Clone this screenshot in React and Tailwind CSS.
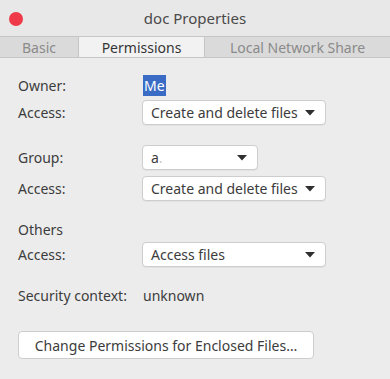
import React from 'react';

const Caret = () => (
  <svg width="10" height="6" viewBox="0 0 10 6" className="shrink-0">
    <path d="M0 0 L10 0 L5 5.5 Z" fill="#2f2f2f" />
  </svg>
);

const Dropdown = ({ children, width }) => (
  <div
    className={`flex h-[25px] items-center justify-between rounded-[4px] border border-[#cdcdcd] bg-white pl-[8px] pr-[10px] shadow-[0_1px_0_rgba(0,0,0,0.04)] ${width}`}
  >
    <span>{children}</span>
    <Caret />
  </div>
);

const Row = ({ label, children, className = '' }) => (
  <div className={`flex items-center ${className}`}>
    <div className="w-[124px] shrink-0">{label}</div>
    {children}
  </div>
);

export default function App() {
  return (
    <div
      className="h-[379px] w-[390px] overflow-hidden bg-[#ececec] text-[14px] text-[#3c3c3c]"
      style={{ fontFamily: '"Noto Sans", "Open Sans", sans-serif' }}
    >
      {/* title bar */}
      <div className="relative flex h-[36px] items-center justify-center bg-[#e8e8e8]">
        <div className="absolute left-[9px] top-[12px] h-[14px] w-[14px] rounded-full bg-[#ef3a4a]" />
        <span className="text-[15px] text-[#4a4a4a]">doc Properties</span>
      </div>

      {/* tabs */}
      <div className="flex h-[22px] border-y border-[#c6c6c6] bg-[#dadada] text-[14px]">
        <div className="flex w-[79px] items-center justify-center border-r border-[#c6c6c6] text-[#8a8a8a]">Basic</div>
        <div className="flex w-[126px] items-center justify-center border-r border-[#c6c6c6] bg-[#f2f2f2] text-[#353535]">Permissions</div>
        <div className="flex flex-1 items-center justify-center text-[#8a8a8a]">Local Network Share</div>
      </div>

      <div className="px-[18px] pt-[18px]">
        <Row label="Owner:" className="h-[18px]">
          <span className="ml-[1px] bg-[#3a6cc6] px-[1px] text-white">Me</span>
        </Row>
        <Row label="Access:" className="mt-[6px]">
          <Dropdown width="w-[184px]">Create and delete files</Dropdown>
        </Row>

        <Row label="Group:" className="mt-[20px]">
          <Dropdown width="w-[116px]">
            a<span className="text-[#c8c8c8]">.</span>
          </Dropdown>
        </Row>
        <Row label="Access:" className="mt-[6px]">
          <Dropdown width="w-[184px]">Create and delete files</Dropdown>
        </Row>

        <div className="mt-[18px] flex h-[20px] items-center">Others</div>
        <Row label="Access:" className="mt-[3px]">
          <Dropdown width="w-[184px]">Access files</Dropdown>
        </Row>

        <Row label="Security context:" className="mt-[18px] h-[20px]">
          <span className="ml-[1px]">unknown</span>
        </Row>

        <div className="mt-[26px] flex h-[28px] w-[296px] items-center justify-center rounded-[4px] border border-[#cdcdcd] bg-white">
          Change Permissions for Enclosed Files…
        </div>
      </div>
    </div>
  );
}
